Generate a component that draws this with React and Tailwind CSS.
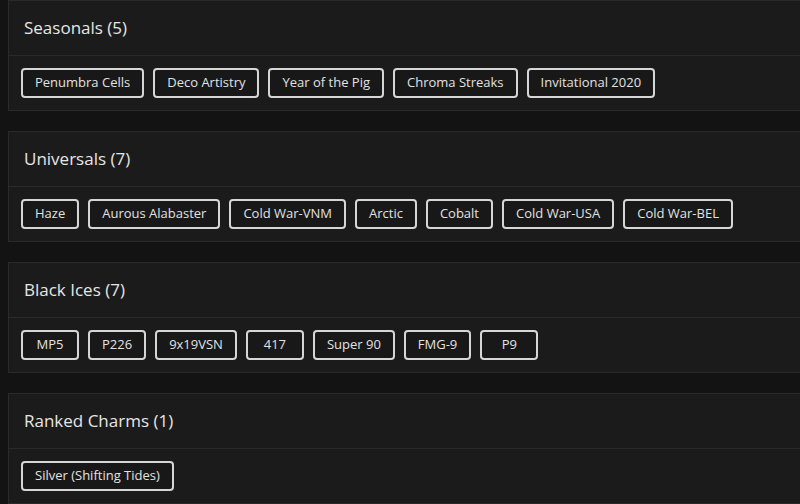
import React from 'react';

const sections = [
  { title: 'Seasonals', items: ['Penumbra Cells', 'Deco Artistry', 'Year of the Pig', 'Chroma Streaks', 'Invitational 2020'] },
  { title: 'Universals', items: ['Haze', 'Aurous Alabaster', 'Cold War-VNM', 'Arctic', 'Cobalt', 'Cold War-USA', 'Cold War-BEL'] },
  { title: 'Black Ices', items: ['MP5', 'P226', '9x19VSN', '417', 'Super 90', 'FMG-9', 'P9'] },
  { title: 'Ranked Charms', items: ['Silver (Shifting Tides)'] },
];

function Section({ title, items }) {
  return (
    <div className="w-[820px] border border-[#2a2a2a] bg-[#1b1b1b]">
      <div className="h-[55px] flex items-center px-[15px] border-b border-[#2a2a2a]">
        <h2 className="text-[17px] font-medium text-[#e6e6e6]">
          {title} ({items.length})
        </h2>
      </div>
      <div className="flex flex-wrap gap-[9px] px-3 py-3">
        {items.map((item) => (
          <span
            key={item}
            className="h-[30px] min-w-[58px] flex items-center justify-center px-3 border-2 border-[#d6d6d6] rounded-[4px] text-[13px] text-[#e2e2e2] bg-[#181818]"
          >
            {item}
          </span>
        ))}
      </div>
    </div>
  );
}

export default function App() {
  return (
    <div className="w-[800px] h-[504px] overflow-hidden bg-[#131313]" style={{ fontFamily: '"Open Sans", sans-serif' }}>
      <div className="flex flex-col gap-[20px] pl-2">
        {sections.map((s) => (
          <Section key={s.title} {...s} />
        ))}
      </div>
    </div>
  );
}
